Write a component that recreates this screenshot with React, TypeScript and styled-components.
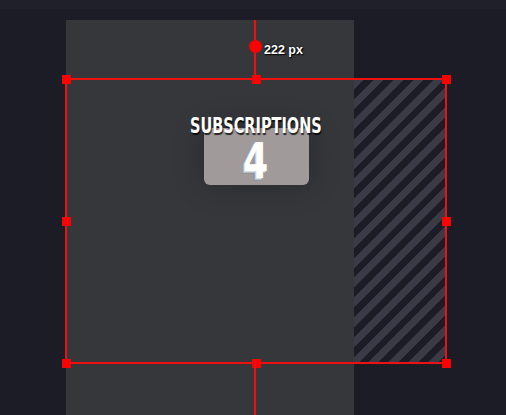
import React from "react";
import styled, { createGlobalStyle } from "styled-components";

const Global = createGlobalStyle`
  html, body { margin: 0; padding: 0; background: #1b1c26; overflow: hidden; }
  #root { width: 506px; height: 415px; }
`;

const RED = "#ee1111";

const Page = styled.div`
  width: 506px;
  height: 415px;
  display: flex;
  flex-direction: column;
  background: #1b1c26;
  overflow: hidden;
`;

const TopBar = styled.div`
  height: 9px;
  background: #1f2029;
  flex-shrink: 0;
`;

const Canvas = styled.div`
  position: relative;
  flex: 1;
  padding: 11px 0 0 66px;
`;

const Panel = styled.div`
  width: 288px;
  height: 420px;
  background: #36373b;
`;

/* overlay: measurement guides + selection box drawn over the panel */
const Overlay = styled.div`
  position: absolute;
  left: 65px;
  top: 11px;
  bottom: 0;
  width: 382px;
  display: flex;
  flex-direction: column;
`;

const TopGuide = styled.div`
  height: 58px;
  display: grid;
  grid-template-columns: 183px 14px 1fr;
`;

const GuideStem = styled.div`
  grid-column: 2;
  display: flex;
  flex-direction: column;
  align-items: center;
`;

const Line = styled.div<{ $h?: number }>`
  width: 2px;
  background: ${RED};
  ${(p) => (p.$h ? `height: ${p.$h}px;` : "flex: 1;")}
`;

const Dot = styled.div`
  width: 13px;
  height: 13px;
  border-radius: 50%;
  background: #ff0000;
  flex-shrink: 0;
`;

const DimLabel = styled.div`
  grid-column: 3;
  padding: 23px 0 0 2px;
  font-family: "Liberation Sans", Arial, sans-serif;
  font-weight: 700;
  font-size: 12.5px;
  line-height: 14px;
  color: #ffffff;
  text-shadow: 0 0 2px #000, 1px 1px 1px #000;
`;

const BottomGuide = styled.div`
  flex: 1;
  display: flex;
  flex-direction: column;
  align-items: flex-start;
  padding-left: 189px;
`;

const Selection = styled.div`
  height: 286px;
  flex-shrink: 0;
  box-sizing: border-box;
  border: 2px solid ${RED};
  display: grid;
  grid-template: 1fr / 1fr;
`;

const Layer = styled.div`
  grid-area: 1 / 1;
`;

const StripeRow = styled(Layer)`
  display: flex;
`;

const Spacer = styled.div`
  width: 287px;
`;

const Stripes = styled.div`
  flex: 1;
  background: repeating-linear-gradient(
    135deg,
    #3a3b46 0px,
    #3a3b46 7px,
    #1b1c26 7px,
    #1b1c26 14px
  );
`;

const Content = styled(Layer)`
  display: flex;
  flex-direction: column;
  align-items: center;
  padding-top: 35px;
`;

const Title = styled.div`
  font-family: "DejaVu Sans Condensed", "DejaVu Sans", sans-serif;
  font-stretch: condensed;
  font-weight: 700;
  font-size: 21.5px;
  line-height: 22px;
  color: #ffffff;
  text-shadow: 1px 2px 1px rgba(0, 0, 0, 0.75);
  transform: scaleX(0.75);
  position: relative;
  z-index: 1;
  white-space: nowrap;
`;

const Card = styled.div`
  margin-top: -9px;
  width: 105px;
  height: 57px;
  border-radius: 6px;
  background: #a09a9b;
  box-shadow: 0 0 30px rgba(0, 0, 0, 0.25);
  display: flex;
  justify-content: center;
  align-items: center;
`;

const Count = styled.div`
  font-family: "DejaVu Sans Condensed", "DejaVu Sans", sans-serif;
  font-weight: 700;
  font-size: 50px;
  line-height: 50px;
  color: #ffffff;
  margin-top: 8px;
  text-shadow: -1px 1px 0 #d8dee4, -2px 2px 0 #b4bcc4, -3px 3px 0 #8e959c;
  transform: scaleX(0.8);
`;

const HandleGrid = styled(Layer)`
  margin: -5.5px;
  display: grid;
  grid-template-columns: repeat(3, 9px);
  grid-template-rows: repeat(3, 9px);
  justify-content: space-between;
  align-content: space-between;
`;

const Handle = styled.div<{ $hidden?: boolean }>`
  background: ${(p) => (p.$hidden ? "transparent" : "#ff0000")};
`;

export default function App() {
  return (
    <Page>
      <Global />
      <TopBar />
      <Canvas>
        <Panel />
        <Overlay>
          <TopGuide>
            <GuideStem>
              <Line $h={20} />
              <Dot />
              <Line />
            </GuideStem>
            <DimLabel>222 px</DimLabel>
          </TopGuide>
          <Selection>
            <StripeRow>
              <Spacer />
              <Stripes />
            </StripeRow>
            <Content>
              <Title>SUBSCRIPTIONS</Title>
              <Card>
                <Count>4</Count>
              </Card>
            </Content>
            <HandleGrid>
              {Array.from({ length: 9 }, (_, i) => (
                <Handle key={i} $hidden={i === 4} />
              ))}
            </HandleGrid>
          </Selection>
          <BottomGuide>
            <Line />
          </BottomGuide>
        </Overlay>
      </Canvas>
    </Page>
  );
}
